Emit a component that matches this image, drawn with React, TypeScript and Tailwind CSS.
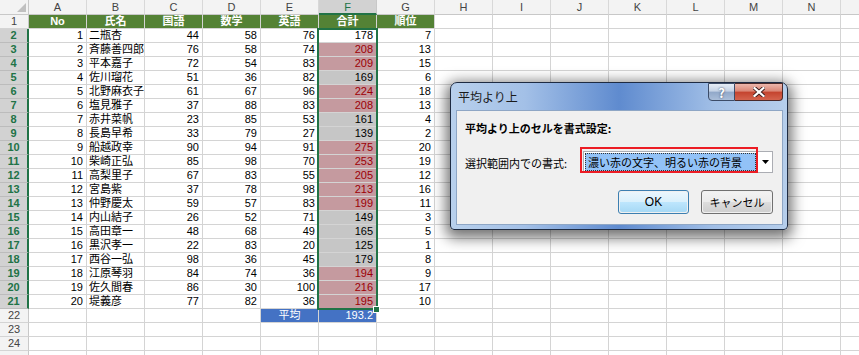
import type { ReactNode } from 'react'

const COLS = ['A', 'B', 'C', 'D', 'E', 'F', 'G', 'H', 'I', 'J', 'K', 'L', 'M', 'N']
const HEADERS = ['No', '氏名', '国語', '数学', '英語', '合計', '順位']

type Student = [number, string, number, number, number, number, number]

const DATA: Student[] = [
  [1, '二瓶杏', 44, 58, 76, 178, 7],
  [2, '斉藤善四郎', 76, 58, 74, 208, 13],
  [3, '平本嘉子', 72, 54, 83, 209, 15],
  [4, '佐川瑠花', 51, 36, 82, 169, 6],
  [5, '北野麻衣子', 61, 67, 96, 224, 18],
  [6, '塩見雅子', 37, 88, 83, 208, 13],
  [7, '赤井菜帆', 23, 85, 53, 161, 4],
  [8, '長島早希', 33, 79, 27, 139, 2],
  [9, '船越政幸', 90, 94, 91, 275, 20],
  [10, '柴崎正弘', 85, 98, 70, 253, 19],
  [11, '高梨里子', 67, 83, 55, 205, 12],
  [12, '宮島紫', 37, 78, 98, 213, 16],
  [13, '仲野慶太', 59, 57, 83, 199, 11],
  [14, '内山結子', 26, 52, 71, 149, 3],
  [15, '高田章一', 48, 68, 49, 165, 5],
  [16, '黒沢孝一', 22, 83, 20, 125, 1],
  [17, '西谷一弘', 98, 36, 45, 179, 8],
  [18, '江原琴羽', 84, 74, 36, 194, 9],
  [19, '佐久間春', 86, 30, 100, 216, 17],
  [20, '堤義彦', 77, 82, 36, 195, 10],
]

const AVG = 193.2
const ROWS = 25

function Cell({ children, className = '' }: { children?: ReactNode; className?: string }) {
  return (
    <div className={`w-[58px] h-full shrink-0 border-r border-b border-[#d4d4d4] overflow-hidden whitespace-nowrap ${className}`}>
      {children}
    </div>
  )
}

function RowCells({ r }: { r: number }) {
  if (r === 1) {
    return (
      <>
        {HEADERS.map((h) => (
          <Cell key={h} className="bg-[#548235] border-[#548235] text-white font-bold text-center">
            {h}
          </Cell>
        ))}
        {COLS.slice(7).map((c) => <Cell key={c} />)}
      </>
    )
  }
  if (r >= 2 && r <= 21) {
    const [no, name, a, b, c, total, rank] = DATA[r - 2]
    let fCls = 'bg-[#c6c6c6] text-black'
    if (r === 2) fCls = 'bg-white text-black'
    else if (total > AVG) fCls = 'bg-[#c59a9f] text-[#9c0006]'
    return (
      <>
        <Cell className="text-right pr-[3px]">{no}</Cell>
        <Cell className="pl-[2px]">{name}</Cell>
        <Cell className="text-right pr-[3px]">{a}</Cell>
        <Cell className="text-right pr-[3px]">{b}</Cell>
        <Cell className="text-right pr-[3px]">{c}</Cell>
        <Cell className={`text-right pr-[3px] ${fCls}`}>{total}</Cell>
        <Cell className="text-right pr-[3px]">{rank}</Cell>
        {COLS.slice(7).map((col) => <Cell key={col} />)}
      </>
    )
  }
  if (r === 22) {
    return (
      <>
        {COLS.slice(0, 4).map((c) => <Cell key={c} />)}
        <Cell className="bg-[#4472c4] border-[#4472c4] text-white text-center">平均</Cell>
        <Cell className="bg-[#4472c4] border-[#4472c4] text-white text-right pr-[3px]">{AVG}</Cell>
        {COLS.slice(6).map((c) => <Cell key={c} />)}
      </>
    )
  }
  return (
    <>
      {COLS.map((c) => <Cell key={c} />)}
    </>
  )
}

function Sheet() {
  return (
    <div className="relative text-[11px] leading-[13px] text-black font-['Liberation_Sans','Noto_Sans_CJK_JP',sans-serif]">
      {/* column headers */}
      <div className="flex h-[15px] bg-[#f3f3f3] text-[#444]">
        <div className="relative w-[29px] h-full shrink-0 border-r border-b border-[#c8c8c8]">
          <div className="absolute right-[2px] bottom-[2px] w-0 h-0 border-l-[9px] border-l-transparent border-b-[9px] border-b-[#c0c0c0]" />
        </div>
        {COLS.map((c) => (
          <div
            key={c}
            className={`w-[58px] h-full shrink-0 border-r text-center leading-[14px] ${
              c === 'F'
                ? 'bg-[#d2d2d2] text-[#217346] border-[#c8c8c8] border-b-2 border-b-[#217346]'
                : 'border-[#d8d8d8] border-b border-b-[#c8c8c8]'
            }`}
          >
            {c}
          </div>
        ))}
        <div className="flex-1 border-b border-[#c8c8c8]" />
      </div>

      {Array.from({ length: ROWS }, (_, i) => i + 1).map((r) => {
        const sel = r >= 2 && r <= 21
        return (
          <div key={r} className="flex h-[14px] shrink-0">
            <div
              className={`w-[29px] h-full shrink-0 border-b text-center leading-[13px] ${
                sel
                  ? 'bg-[#d2d2d2] text-[#217346] font-bold border-b-[#bcbcbc] border-r-2 border-r-[#217346]'
                  : 'bg-[#f3f3f3] text-[#444] border-b-[#d4d4d4] border-r border-r-[#c8c8c8]'
              }`}
            >
              {r < ROWS ? r : null}
            </div>
            <RowCells r={r} />
            <div className="flex-1 h-full border-b border-[#d4d4d4]" />
          </div>
        )
      })}

      {/* selection F2:F21 */}
      <div className="absolute left-[317px] top-[28px] w-[61px] h-[282px] border-2 border-[#217346] pointer-events-none" />
      <div className="absolute left-[373px] top-[306px] w-[7px] h-[7px] bg-[#217346] border border-white" />
    </div>
  )
}

function Dialog() {
  return (
    <div className="absolute left-[450px] top-[82px] w-[338px] h-[148px] flex flex-col pl-[5px] pr-[4px] pb-[4px] rounded-t-[7px] rounded-b-[4px] border border-[#1e2b42] shadow-[0_4px_14px_4px_rgba(0,0,0,0.55)] bg-[linear-gradient(90deg,#b8d0ec_0%,#a3c0e7_22%,#5f8bcf_50%,#a0bee6_78%,#b6ceeb_100%)] font-['Noto_Sans_CJK_JP','Liberation_Sans',sans-serif]">
      <div className="h-[27px] shrink-0 flex items-start justify-between">
        <span className="mt-[7px] ml-[2px] text-[12px] leading-[14px] text-[#1a1a1a]">平均より上</span>
        <div className="flex">
          <div className="w-[27px] h-[18px] flex items-center justify-center rounded-bl-[4px] border border-[#3c4c68] bg-[linear-gradient(180deg,#e6edf6_0%,#c4d2e5_45%,#91a8c9_50%,#aabed9_100%)] text-white font-bold text-[13px] leading-none [text-shadow:0_0_2px_#2a3550]">
            ?
          </div>
          <div className="w-[48px] h-[18px] flex items-center justify-center rounded-br-[4px] border border-l-0 border-[#4a2a2a] bg-[linear-gradient(180deg,#ecb6ab_0%,#da8675_45%,#c4432e_50%,#d4644e_100%)]">
            <svg width="12" height="10" viewBox="0 0 12 10">
              <path d="M1.5 1 L10.5 9 M10.5 1 L1.5 9" stroke="#3a1a1a" strokeWidth="4" strokeLinecap="square" />
              <path d="M1.5 1 L10.5 9 M10.5 1 L1.5 9" stroke="#fff" strokeWidth="2.2" strokeLinecap="square" />
            </svg>
          </div>
        </div>
      </div>

      <div className="flex-1 border border-[#8ea6c5] bg-[#f0f0f0] pl-[8px] pr-[9px] pt-[10px] text-[11px] leading-[14px] text-black">
        <div className="font-bold">平均より上のセルを書式設定:</div>

        <div className="mt-[12px] h-[26px] flex items-center">
          <span className="w-[115px] shrink-0 pt-[5px]">選択範囲内での書式:</span>
          <div className="relative h-[26px] pt-[4px] pl-[3px]">
            <div className="w-[190px] h-[22px] flex bg-white border border-[#abadb3]">
              <div className="flex-1 p-[1px]">
                <div className="h-full bg-[#92c2f7] border border-dotted border-[#333] pl-[2px] leading-[16px]">
                  濃い赤の文字、明るい赤の背景
                </div>
              </div>
              <div className="w-[15px] flex items-center justify-center border-l border-[#d0d0d0]">
                <svg width="7" height="4" viewBox="0 0 7 4">
                  <path d="M0 0 H7 L3.5 4 Z" fill="#000" />
                </svg>
              </div>
            </div>
            <div className="absolute left-0 top-0 w-[178px] h-[26px] border-2 border-[#ec1c24]" />
          </div>
        </div>

        <div className="mt-[17px] flex justify-end gap-[12px]">
          <div className="w-[71px] h-[24px] rounded-[3px] border border-[#3c7fb1] p-px">
            <div className="h-full rounded-[2px] flex items-center justify-center text-[12px] bg-[linear-gradient(180deg,#eaf6fd_0%,#d9f0fc_50%,#bee6fd_50%,#a7d9f5_100%)] font-['Liberation_Sans','Noto_Sans_CJK_JP',sans-serif]">
              OK
            </div>
          </div>
          <div className="w-[72px] h-[24px] rounded-[3px] border border-[#707070] p-px">
            <div className="h-full rounded-[2px] flex items-center justify-center text-[11px] bg-[linear-gradient(180deg,#f2f2f2_0%,#ebebeb_50%,#dddddd_50%,#cfcfcf_100%)]">
              キャンセル
            </div>
          </div>
        </div>
      </div>
    </div>
  )
}

export default function App() {
  return (
    <div className="relative w-[859px] h-[355px] overflow-hidden bg-white">
      <Sheet />
      <Dialog />
    </div>
  )
}
